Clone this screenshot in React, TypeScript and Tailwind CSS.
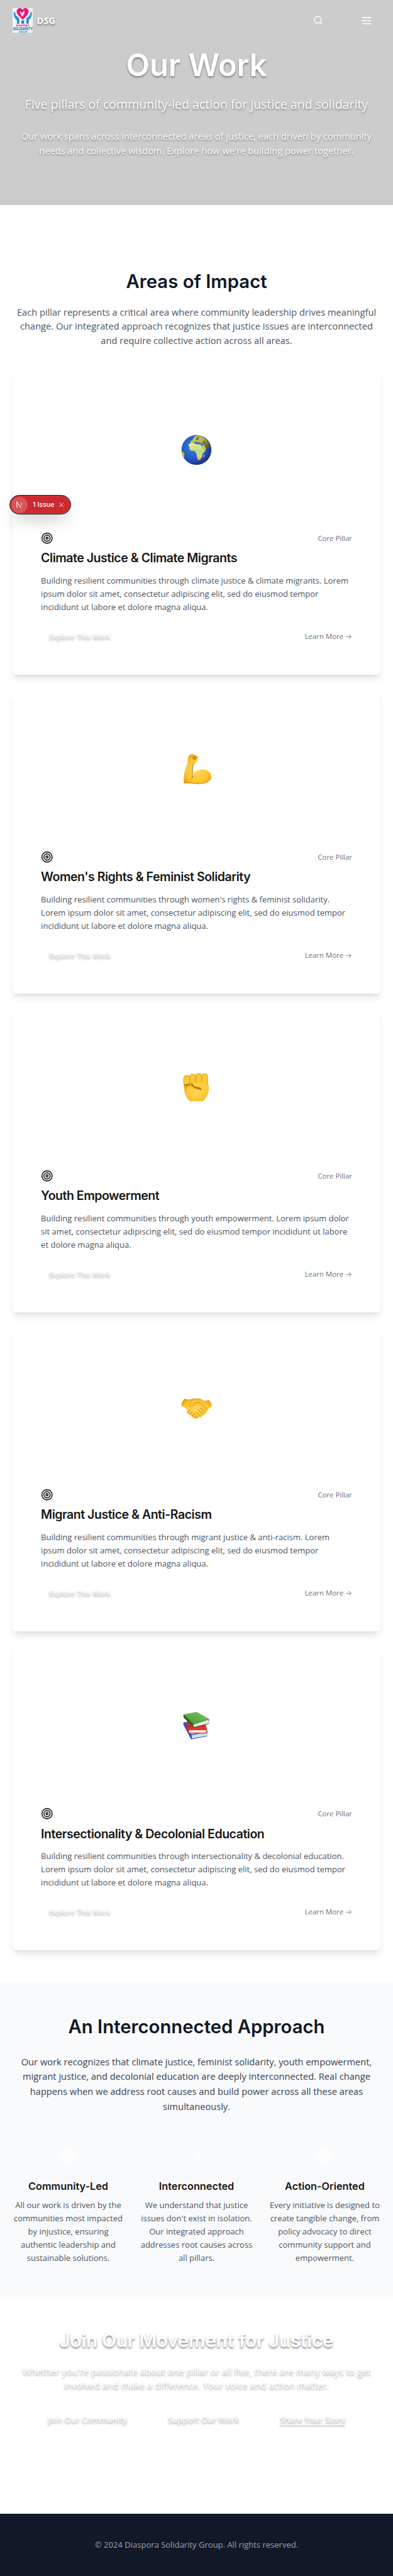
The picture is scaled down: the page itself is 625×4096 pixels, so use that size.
import React from "react";
import { Search, Target, ArrowRight } from "lucide-react";

const glow = "[text-shadow:0_2px_4px_rgba(0,0,0,0.4)]";
const strongGlow = "[text-shadow:0_2px_4px_rgba(0,0,0,0.5)]";

function Logo() {
  return (
    <svg viewBox="0 0 40 48" className="h-12 w-10 shrink-0">
      <rect width="40" height="48" fill="#f4f4f6" />
      <path d="M20 22.5C14 17 8 12 8 6.500C8 2.500 11 0 14.200 0C17 0 19 1.500 19.600 3.500C20.300 1.500 22.300 0 25 0C28.500 0 31.200 2.700 31.200 6.500C31.200 12 26 17 20 22.500Z" fill="#ec1374" />
      <path d="M14.300 5.500L18.500 9.500L21 6.200L24 5.500L23 8.500C23.300 12 21.500 14 19.500 15.200L17.300 17L17.500 13.500C15.500 12 14.300 9 14.300 5.500Z" fill="#fbe9f2" />
      <path d="M2.500 7.500c1-.8 2 0 2.400 1.500l2 5.500 4.600 4c1.200 1.200 1.700 2.500 1.700 4v8H8.400v-7L4 18.500C2.800 15 2 11 2.500 7.500Z" fill="#2a8fd0" />
      <path d="M37.500 7.500c-1-.8-2 0-2.400 1.500l-2 5.500-4.600 4c-1.200 1.200-1.700 2.500-1.700 4v8h4.800v-7L36 18.500c1.200-3.500 2-7.500 1.500-11Z" fill="#2a8fd0" />
      <path d="M17.300 22.500l2.700 2 2.500-2v8h-5.200z" fill="#1787cc" />
      <text x="7" y="36" textLength="26" lengthAdjust="spacingAndGlyphs" fontSize="5" fontWeight="800" fontFamily="Inter, sans-serif" fill="#dd2a7d">DIASPORA</text>
      <text x="0.500" y="43.200" textLength="39" lengthAdjust="spacingAndGlyphs" fontSize="8.400" fontWeight="800" fontFamily="Inter, sans-serif" fill="#1f83c6">SOLIDARITY</text>
      <text x="12" y="47.400" textLength="17" fontSize="4.200" fontWeight="800" fontFamily="Inter, sans-serif" fill="#2a8fd0">GROUP</text>
    </svg>
  );
}

function Defs() {
  return (
    <svg className="absolute h-0 w-0" aria-hidden="true">
      <defs>
        <radialGradient id="sea" cx="0.4" cy="0.4" r="0.65">
          <stop offset="0" stopColor="#3f86dc" />
          <stop offset="0.6" stopColor="#2459c6" />
          <stop offset="1" stopColor="#1d2f78" />
        </radialGradient>
        <linearGradient id="land" x1="0" y1="0" x2="0" y2="1">
          <stop offset="0" stopColor="#f3ee8a" />
          <stop offset="0.5" stopColor="#b5d98a" />
          <stop offset="0.75" stopColor="#ddd773" />
          <stop offset="1" stopColor="#d8b93c" />
        </linearGradient>
        <linearGradient id="north" x1="0" y1="0" x2="1" y2="0.6">
          <stop offset="0" stopColor="#c8cf57" />
          <stop offset="0.6" stopColor="#c0b43a" />
          <stop offset="1" stopColor="#5f5a1c" />
        </linearGradient>
        <radialGradient id="skin" cx="0.5" cy="0.55" r="0.6">
          <stop offset="0" stopColor="#ffd75a" />
          <stop offset="0.7" stopColor="#fcc42f" />
          <stop offset="1" stopColor="#e9a012" />
        </radialGradient>
        <linearGradient id="cover" x1="0" y1="1" x2="1" y2="0">
          <stop offset="0" stopColor="#3f9a2e" />
          <stop offset="1" stopColor="#86c46c" />
        </linearGradient>
      </defs>
    </svg>
  );
}

const box = "h-[60px] w-[60px]";

function Globe() {
  return (
    <svg viewBox="0 0 60 60" className={box}>
      <circle cx="30" cy="30" r="29.200" fill="url(#sea)" />
      <path d="M17.500 14l3-4 4-3 1-3 6-2.500 8 1.500 8 5 6 7 4 8 .6 5-2.600-5-2.500 2-1.500 3-3-1-4-6-2-3-4-.5-3-2.500-3 .5-4-2-4 2.500-6 1z" fill="url(#north)" />
      <path d="M20 8l3 1-2 3-2-1zM31 6l3-3 0 5-3 3-2-2zM41 14l5-1 1 4-3-1zM46.500 15.500l1.500 4-1.800.5z" fill="#2459c6" />
      <path d="M40 20l4 1 4 5 1.500 1-4.500 3-3-5z" fill="#d4ca55" />
      <path d="M14 20l5-3.300 6-.4 2 2 5 .6 6 .4 3 5 3 5 4.500.2-2.700 4.500-4.500 4.500.2 4-2.200 3.500-2.500 3.500-3.500.3-2.600-6-.2-5-2-4-2.700-3.200-5.800.2-4-4.300.3-4z" fill="url(#land)" />
      <path d="M43.500 40l2.500-1.500-.8 4.500-2.200 2.500z" fill="#c9b23c" />
      <path d="M1.200 32l3 2 2.600 3.500-1.300 8.500-2.500-5z" fill="#cbb92c" />
    </svg>
  );
}

function Biceps() {
  return (
    <svg viewBox="0 0 60 60" className={box}>
      <path d="M22 1.300C17 2 14 5.500 13.400 9L12.400 19C9.500 26 7 34 5.800 42.300L5 56.500C5.500 58.500 7 58.300 9 58.200L20 58.300C31 60 42 59.400 50 56.500C56 54.500 59.200 51 59 46.500C58.500 41.500 57 38 55 35.600C51 32.300 45.500 31 40.300 31.300C34 32 29 34 25.600 37.500L21.500 46L22.800 22C26 20.500 29 18.500 30.500 16.600C32.800 12.500 33.500 8 33 5.600L28 3.500Z" fill="url(#skin)" />
      <path d="M20.500 48.500L21.800 46.500L23 22L26 20.500M21 46.500C22 47.500 22.500 46.500 22.500 45" fill="none" stroke="#a8650a" strokeWidth="1.100" />
      <path d="M5.500 57.300C12 57.800 20 57.500 26 58.600C38 60 47 58.200 52 55.500" fill="none" stroke="#c07a12" strokeWidth="1" />
      <path d="M22 8l4-1.500 4 1M22.500 8l1 3M24 12l5-1 .5-3M26 7l.5 3" fill="none" stroke="#a8650a" strokeWidth="1.200" />
    </svg>
  );
}

function Fist() {
  return (
    <svg viewBox="0 0 60 60" className={box}>
      <path d="M5 22L6.500 37C8 46 12 53 18 56.500H41.700C48 53 53.500 43 54.400 32.500C54.500 28 53.500 25 51.500 22Z" fill="url(#skin)" />
      <g fill="#fcc936" stroke="#b9780f" strokeWidth="0.800">
        <rect x="40" y="3" width="12" height="23" rx="5" />
        <rect x="28.300" y="2.600" width="12" height="22" rx="5" />
        <rect x="16.600" y="4" width="12" height="23" rx="5" />
        <rect x="5" y="6.600" width="12" height="18.500" rx="5" />
      </g>
      <path d="M21.500 22C22 18 27 19 32 19.500C40 18.500 46 19 50 21.500C55 26 54.500 34 52 40L38 41C40 36 39 31 33 30C26 29 21 27 21.500 22Z" fill="#fdcb3c" />
      <path d="M7 24C10 27 15 26.500 17.500 22M21.500 21C21.500 26.500 26 29 32 29.300C37 30 39 32 38.800 34.500C36.500 32.500 32 33 27.500 30.500C23 28.500 20 25 19.500 22" fill="#8a560c" stroke="#8a560c" strokeWidth="0.900" fillOpacity="0.6" />
    </svg>
  );
}

function Handshake() {
  return (
    <svg viewBox="0 0 60 60" className={box}>
      <path d="M7.500 14C3 17.500.300 23 .200 28.700C5 30.500 9 34 12.500 37.500C11.800 41 12 43.500 14 45L17.500 46C18 48.500 19.500 50 22 50C23 52.500 25.500 53.800 28 53C30 54 33.500 53.500 35 51C38 51.500 41 50 42 47.500C45.500 47 48.500 44 50 40.300C51 36 55 32.500 60 30C59.700 24.500 57.500 20 53.500 17C50 19 47 19 43.700 18C40 15.500 37 14.300 33 14L24 14.500C20 16 11 17.500 7.500 14Z" fill="url(#skin)" />
      <path d="M23 16C20 19 17 24 16.500 28C18 32 22 30 24 27C26 24 28 22 31 22.500L36 22C41 27 47 33 50.500 37" fill="none" stroke="#c58212" strokeWidth="1.100" />
      <path d="M38 33l9 8M34 37l9 8M30 41l8 8" fill="none" stroke="#b06f0d" strokeWidth="1.100" />
      <path d="M12.500 43c1-3 3-6 5-5.500M17.500 46c1-3 3-5.500 5-5M22.500 50c0-3 2.500-6 5-5.500M28 53c0-3 1.500-5 3.500-5" fill="none" stroke="#b06f0d" strokeWidth="1.100" />
    </svg>
  );
}

function Books() {
  return (
    <svg viewBox="0 0 60 60" className={box}>
      <path d="M4.500 23L10 22L20 46L52 40V42L50.500 49.500L52 50.200L19.700 56.300C14 45 7 33 4.500 27Z" fill="#2f56b8" />
      <path d="M20.500 48L51 42L51.200 49L21.500 54.500Z" fill="#d9dce2" />
      <path d="M11 20L48 27L50.500 37L49 44.800L14 44.500C11.500 37 10.500 28 11 20Z" fill="#d8261c" />
      <path d="M15.500 38.200H49L48.400 43.300H15.500Z" fill="#e6e6e8" />
      <path d="M15 33L48 30L50 37H14.500Z" fill="#e8352a" />
      <path d="M5 7.500C4.500 10 4.500 12 5 13.700L24.600 33.300L55.500 25.500L54 24.500L55 17Z" fill="#2c6b1c" />
      <path d="M24.600 27L54.500 17.500C53 20 53.500 22 54.500 24.500L25.500 32C24 30.500 23.800 28.500 24.600 27Z" fill="#eceeec" />
      <path d="M5 7.500L30.500 2.400L55.500 16.500L24.600 26.500Z" fill="url(#cover)" />
    </svg>
  );
}

const pillars = [
  {
    title: "Climate Justice & Climate Migrants",
    art: <Globe />,
    lines: [
      "Building resilient communities through climate justice & climate migrants. Lorem",
      "ipsum dolor sit amet, consectetur adipiscing elit, sed do eiusmod tempor",
      "incididunt ut labore et dolore magna aliqua.",
    ],
  },
  {
    title: "Women's Rights & Feminist Solidarity",
    art: <Biceps />,
    lines: [
      "Building resilient communities through women's rights & feminist solidarity.",
      "Lorem ipsum dolor sit amet, consectetur adipiscing elit, sed do eiusmod tempor",
      "incididunt ut labore et dolore magna aliqua.",
    ],
  },
  {
    title: "Youth Empowerment",
    art: <Fist />,
    lines: [
      "Building resilient communities through youth empowerment. Lorem ipsum dolor",
      "sit amet, consectetur adipiscing elit, sed do eiusmod tempor incididunt ut labore",
      "et dolore magna aliqua.",
    ],
  },
  {
    title: "Migrant Justice & Anti-Racism",
    art: <Handshake />,
    lines: [
      "Building resilient communities through migrant justice & anti-racism. Lorem",
      "ipsum dolor sit amet, consectetur adipiscing elit, sed do eiusmod tempor",
      "incididunt ut labore et dolore magna aliqua.",
    ],
  },
  {
    title: "Intersectionality & Decolonial Education",
    art: <Books />,
    lines: [
      "Building resilient communities through intersectionality & decolonial education.",
      "Lorem ipsum dolor sit amet, consectetur adipiscing elit, sed do eiusmod tempor",
      "incididunt ut labore et dolore magna aliqua.",
    ],
  },
];

const values = [
  {
    title: "Community-Led",
    icon: <Target size={32} />,
    lines: ["All our work is driven by the", "communities most impacted", "by injustice, ensuring", "authentic leadership and", "sustainable solutions."],
  },
  {
    title: "Interconnected",
    icon: <ArrowRight size={32} />,
    lines: ["We understand that justice", "issues don't exist in isolation.", "Our integrated approach", "addresses root causes across", "all pillars."],
  },
  {
    title: "Action-Oriented",
    icon: <Target size={32} />,
    lines: ["Every initiative is designed to", "create tangible change, from", "policy advocacy to direct", "community support and", "empowerment."],
  },
];

function Lines({ lines }: { lines: string[] }) {
  return (
    <>
      {lines.map((line) => (
        <span key={line} className="block whitespace-nowrap">
          {line}
        </span>
      ))}
    </>
  );
}

function IssueToast() {
  return (
    <div className="absolute top-[967px] left-[19px] flex h-[38px] w-[120px] items-center rounded-full border border-[#171717] bg-[#ca2a30] shadow-[0_16px_32px_-8px_rgba(0,0,0,0.24),inset_0_0_0_1px_#e5484d]">
      <span className="ml-0.5 flex h-8 w-8 items-center justify-center rounded-full bg-[#d6545a]">
        <svg viewBox="0 0 14 14" className="h-3.5 w-3.5" fill="none" stroke="#fff" strokeWidth="1.300">
          <path d="M2.200 12.500V1.500L10.500 13" />
          <path d="M11.300 1.500V8.500" opacity="0.75" />
        </svg>
      </span>
      <span className="ml-[10px] font-['Inter'] text-[13px] font-medium whitespace-nowrap text-white">1 Issue</span>
      <svg viewBox="0 0 10 10" className="ml-[9px] h-[9px] w-[9px]" stroke="#fff" strokeWidth="1.200">
        <path d="M0.500 0.500L9.500 9.500M9.500 0.500L0.500 9.500" />
      </svg>
    </div>
  );
}

export default function App() {
  return (
    <div className="relative overflow-hidden bg-white font-['Open_Sans',sans-serif] text-[#171717] [zoom:0.8143]">
      <Defs />
      <section className="h-[400px] bg-[#cccccc] text-center text-white">
        <header className="flex h-20 items-center justify-between pr-10 pl-6">
          <div className="flex items-center gap-2">
            <Logo />
            <span className={`text-lg font-bold ${glow}`}>DSG</span>
          </div>
          <div className="flex items-center gap-[72px]">
            <Search size={20} />
            <svg viewBox="0 0 24 24" className="h-6 w-6" stroke="currentColor" strokeWidth="2" strokeLinecap="round">
              <path d="M4 6h16M4 12h16M4 18h16" />
            </svg>
          </div>
        </header>
        <h1 className={`pt-[15px] font-['Inter'] text-6xl leading-[66px] font-semibold ${glow}`}>Our Work</h1>
        <p className={`mt-6 text-2xl leading-9 opacity-95 ${glow}`}>Five pillars of community-led action for justice and solidarity</p>
        <p className={`mt-[31px] text-lg leading-7 opacity-90 ${glow}`}>
          <Lines
            lines={[
              "Our work spans across interconnected areas of justice, each driven by community",
              "needs and collective wisdom. Explore how we're building power together.",
            ]}
          />
        </p>
      </section>

      <section className="px-6 pt-32 pb-16">
        <div className="mb-12 text-center">
          <h2 className="mb-6 font-['Inter'] text-4xl leading-[43.2px] font-semibold text-[#111827]">Areas of Impact</h2>
          <div className="flex flex-col items-center text-lg leading-7 text-[#4b5563]">
            <Lines
              lines={[
                "Each pillar represents a critical area where community leadership drives meaningful",
                "change. Our integrated approach recognizes that justice issues are interconnected",
                "and require collective action across all areas.",
              ]}
            />
          </div>
        </div>
        <div className="flex flex-col gap-8">
          {pillars.map((p) => (
            <article
              key={p.title}
              className="h-[590.67px] rounded-lg bg-white p-6 shadow-[0_10px_15px_-3px_rgba(0,0,0,0.1),0_4px_6px_-4px_rgba(0,0,0,0.1)]"
            >
              <div className="flex h-64 items-center justify-center">{p.art}</div>
              <div className="p-8">
                <div className="mb-3 flex h-6 items-center justify-between">
                  <Target size={24} />
                  <span className="text-sm text-[#6b7280]">Core Pillar</span>
                </div>
                <h3 className="mb-4 font-['Inter'] text-2xl leading-[30px] font-semibold tracking-tight whitespace-nowrap">{p.title}</h3>
                <p className="mb-6 leading-[26px] text-[#4b5563]">
                  <Lines lines={p.lines} />
                </p>
                <div className="flex h-[38.67px] items-center justify-between text-sm">
                  <span className={`px-4 font-medium tracking-[0.01em] text-white ${strongGlow}`}>Explore This Work</span>
                  <span className="whitespace-nowrap text-[#6b7280]">
                    Learn More <span className="font-['Inter'] leading-none font-light">→</span>
                  </span>
                </div>
              </div>
            </article>
          ))}
        </div>
      </section>

      <section className="h-[612.300px] bg-[#f9fafb] px-6 pt-16 text-center">
        <h2 className="mb-8 font-['Inter'] text-4xl leading-[43.2px] font-semibold text-[#111827]">An Interconnected Approach</h2>
        <p className="mb-12 text-lg leading-[29.25px] text-[#374151]">
          <Lines
            lines={[
              "Our work recognizes that climate justice, feminist solidarity, youth empowerment,",
              "migrant justice, and decolonial education are deeply interconnected. Real change",
              "happens when we address root causes and build power across all these areas",
              "simultaneously.",
            ]}
          />
        </p>
        <div className="grid grid-cols-3 gap-8">
          {values.map((v) => (
            <div key={v.title} className="flex flex-col items-center">
              <div className="mb-4 flex h-16 w-16 items-center justify-center text-white">{v.icon}</div>
              <h3 className="mb-3 font-['Inter'] text-xl leading-[25px] font-semibold">{v.title}</h3>
              <p className="leading-[25.6px] text-[#4b5563]">
                <Lines lines={v.lines} />
              </p>
            </div>
          ))}
        </div>
      </section>

      <section className={`h-[424px] px-6 pt-16 text-center text-white ${strongGlow}`}>
        <h2 className="mb-6 font-['Inter'] text-4xl leading-[43.2px] font-semibold">Join Our Movement for Justice</h2>
        <p className="mb-[30px] text-lg leading-7 opacity-90">
          <Lines
            lines={[
              "Whether you're passionate about one pillar or all five, there are many ways to get",
              "involved and make a difference. Your voice and action matter.",
            ]}
          />
        </p>
        <div className="flex h-12 items-center justify-center gap-4 font-medium tracking-[0.01em]">
          <span className="px-8">Join Our Community</span>
          <span className="px-8">Support Our Work</span>
          <span className="px-8 underline underline-offset-4">Share Your Story</span>
        </div>
      </section>

      <footer className="flex h-[121.500px] items-center justify-center bg-[#111827] text-[#9ca3af]">
        © 2024 Diaspora Solidarity Group. All rights reserved.
      </footer>
      <IssueToast />
    </div>
  );
}
